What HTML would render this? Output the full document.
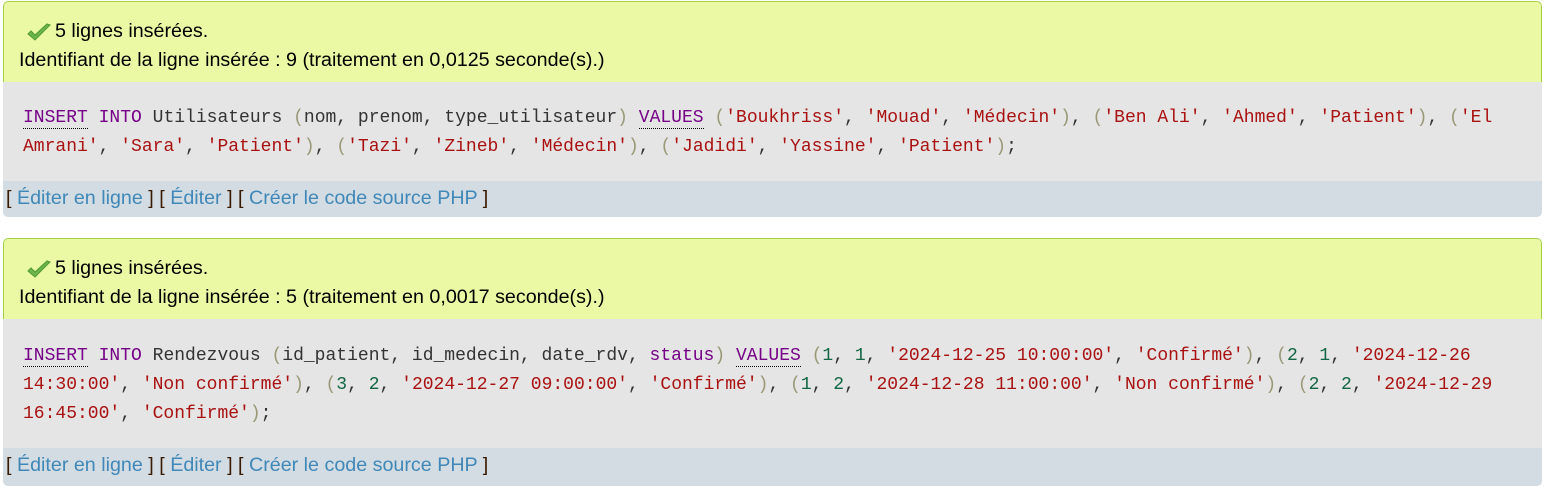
<!DOCTYPE html>
<html><head><meta charset="utf-8"><style>
body{margin:0;background:#fff;width:1552px;height:489px;position:relative;overflow:hidden;font-family:"Liberation Sans",Arial,sans-serif;}
.box{position:absolute;left:3px;width:1539px;border-radius:5px;overflow:hidden;}
.ok{position:absolute;left:0;right:0;top:0;height:81px;background:#ebf8a4;border:1px solid #a2d246;border-bottom:none;border-radius:5px 5px 0 0;box-sizing:border-box;}
.ok .l1{position:absolute;left:51px;top:18px;font-size:19.7px;color:#000;}
.ok .l2{position:absolute;left:15px;top:47px;font-size:19.7px;color:#000;}
.ok svg{position:absolute;left:22px;top:21px;}
.code{position:absolute;left:0;right:0;background:#e5e5e5;}
.code pre{margin:0;position:absolute;left:20px;font-family:"Liberation Mono",monospace;font-size:18px;line-height:29px;color:#333;}
.k{color:#770088}.u{border-bottom:1px dotted #000}.s{color:#aa1111}.n{color:#116644}.p{color:#999977}
.links{position:absolute;left:0;right:0;background:#d3dce3;font-size:19.7px;color:#3a1a00;}
.links span.t{position:absolute;left:3px;}
.links a{color:#3f88b8;text-decoration:none;}
</style></head><body>
<div class="box" style="top:1px;height:216px;">
 <div class="ok"><svg width="26" height="20" viewBox="0 0 26 20"><path d="M2 11 L9 17 L24 2 L21 1 L9 12 L5 8 Z" fill="#6cb44c" stroke="#4e9a32" stroke-width="1"/></svg>
 <div class="l1">5 lignes insérées.</div>
 <div class="l2">Identifiant de la ligne insérée : 9 (traitement en 0,0125 seconde(s).)</div></div>
 <div class="code" style="top:81px;height:99px;"><pre style="top:22px"><span class="k u">INSERT</span> <span class="k">INTO</span> Utilisateurs <span class="p">(</span>nom, prenom, type_utilisateur<span class="p">)</span> <span class="k u">VALUES</span> <span class="p">(</span><span class="s">'Boukhriss'</span>, <span class="s">'Mouad'</span>, <span class="s">'Médecin'</span><span class="p">)</span>, <span class="p">(</span><span class="s">'Ben Ali'</span>, <span class="s">'Ahmed'</span>, <span class="s">'Patient'</span><span class="p">)</span>, <span class="p">(</span><span class="s">'El</span>
<span class="s">Amrani'</span>, <span class="s">'Sara'</span>, <span class="s">'Patient'</span><span class="p">)</span>, <span class="p">(</span><span class="s">'Tazi'</span>, <span class="s">'Zineb'</span>, <span class="s">'Médecin'</span><span class="p">)</span>, <span class="p">(</span><span class="s">'Jadidi'</span>, <span class="s">'Yassine'</span>, <span class="s">'Patient'</span><span class="p">)</span>;</pre></div>
 <div class="links" style="top:180px;height:36px;"><span class="t" style="top:6px">[ <a>Éditer en ligne</a> ] [ <a>Éditer</a> ] [ <a>Créer le code source PHP</a> ]</span></div>
</div>
<div class="box" style="top:238px;height:248px;">
 <div class="ok"><svg width="26" height="20" viewBox="0 0 26 20"><path d="M2 11 L9 17 L24 2 L21 1 L9 12 L5 8 Z" fill="#6cb44c" stroke="#4e9a32" stroke-width="1"/></svg>
 <div class="l1">5 lignes insérées.</div>
 <div class="l2">Identifiant de la ligne insérée : 5 (traitement en 0,0017 seconde(s).)</div></div>
 <div class="code" style="top:81px;height:129px;"><pre style="top:23px"><span class="k u">INSERT</span> <span class="k">INTO</span> Rendezvous <span class="p">(</span>id_patient, id_medecin, date_rdv, <span class="k">status</span><span class="p">)</span> <span class="k u">VALUES</span> <span class="p">(</span><span class="n">1</span>, <span class="n">1</span>, <span class="s">'2024-12-25 10:00:00'</span>, <span class="s">'Confirmé'</span><span class="p">)</span>, <span class="p">(</span><span class="n">2</span>, <span class="n">1</span>, <span class="s">'2024-12-26</span>
<span class="s">14:30:00'</span>, <span class="s">'Non confirmé'</span><span class="p">)</span>, <span class="p">(</span><span class="n">3</span>, <span class="n">2</span>, <span class="s">'2024-12-27 09:00:00'</span>, <span class="s">'Confirmé'</span><span class="p">)</span>, <span class="p">(</span><span class="n">1</span>, <span class="n">2</span>, <span class="s">'2024-12-28 11:00:00'</span>, <span class="s">'Non confirmé'</span><span class="p">)</span>, <span class="p">(</span><span class="n">2</span>, <span class="n">2</span>, <span class="s">'2024-12-29</span>
<span class="s">16:45:00'</span>, <span class="s">'Confirmé'</span><span class="p">)</span>;</pre></div>
 <div class="links" style="top:210px;height:38px;"><span class="t" style="top:6px">[ <a>Éditer en ligne</a> ] [ <a>Éditer</a> ] [ <a>Créer le code source PHP</a> ]</span></div>
</div>
</body></html>
